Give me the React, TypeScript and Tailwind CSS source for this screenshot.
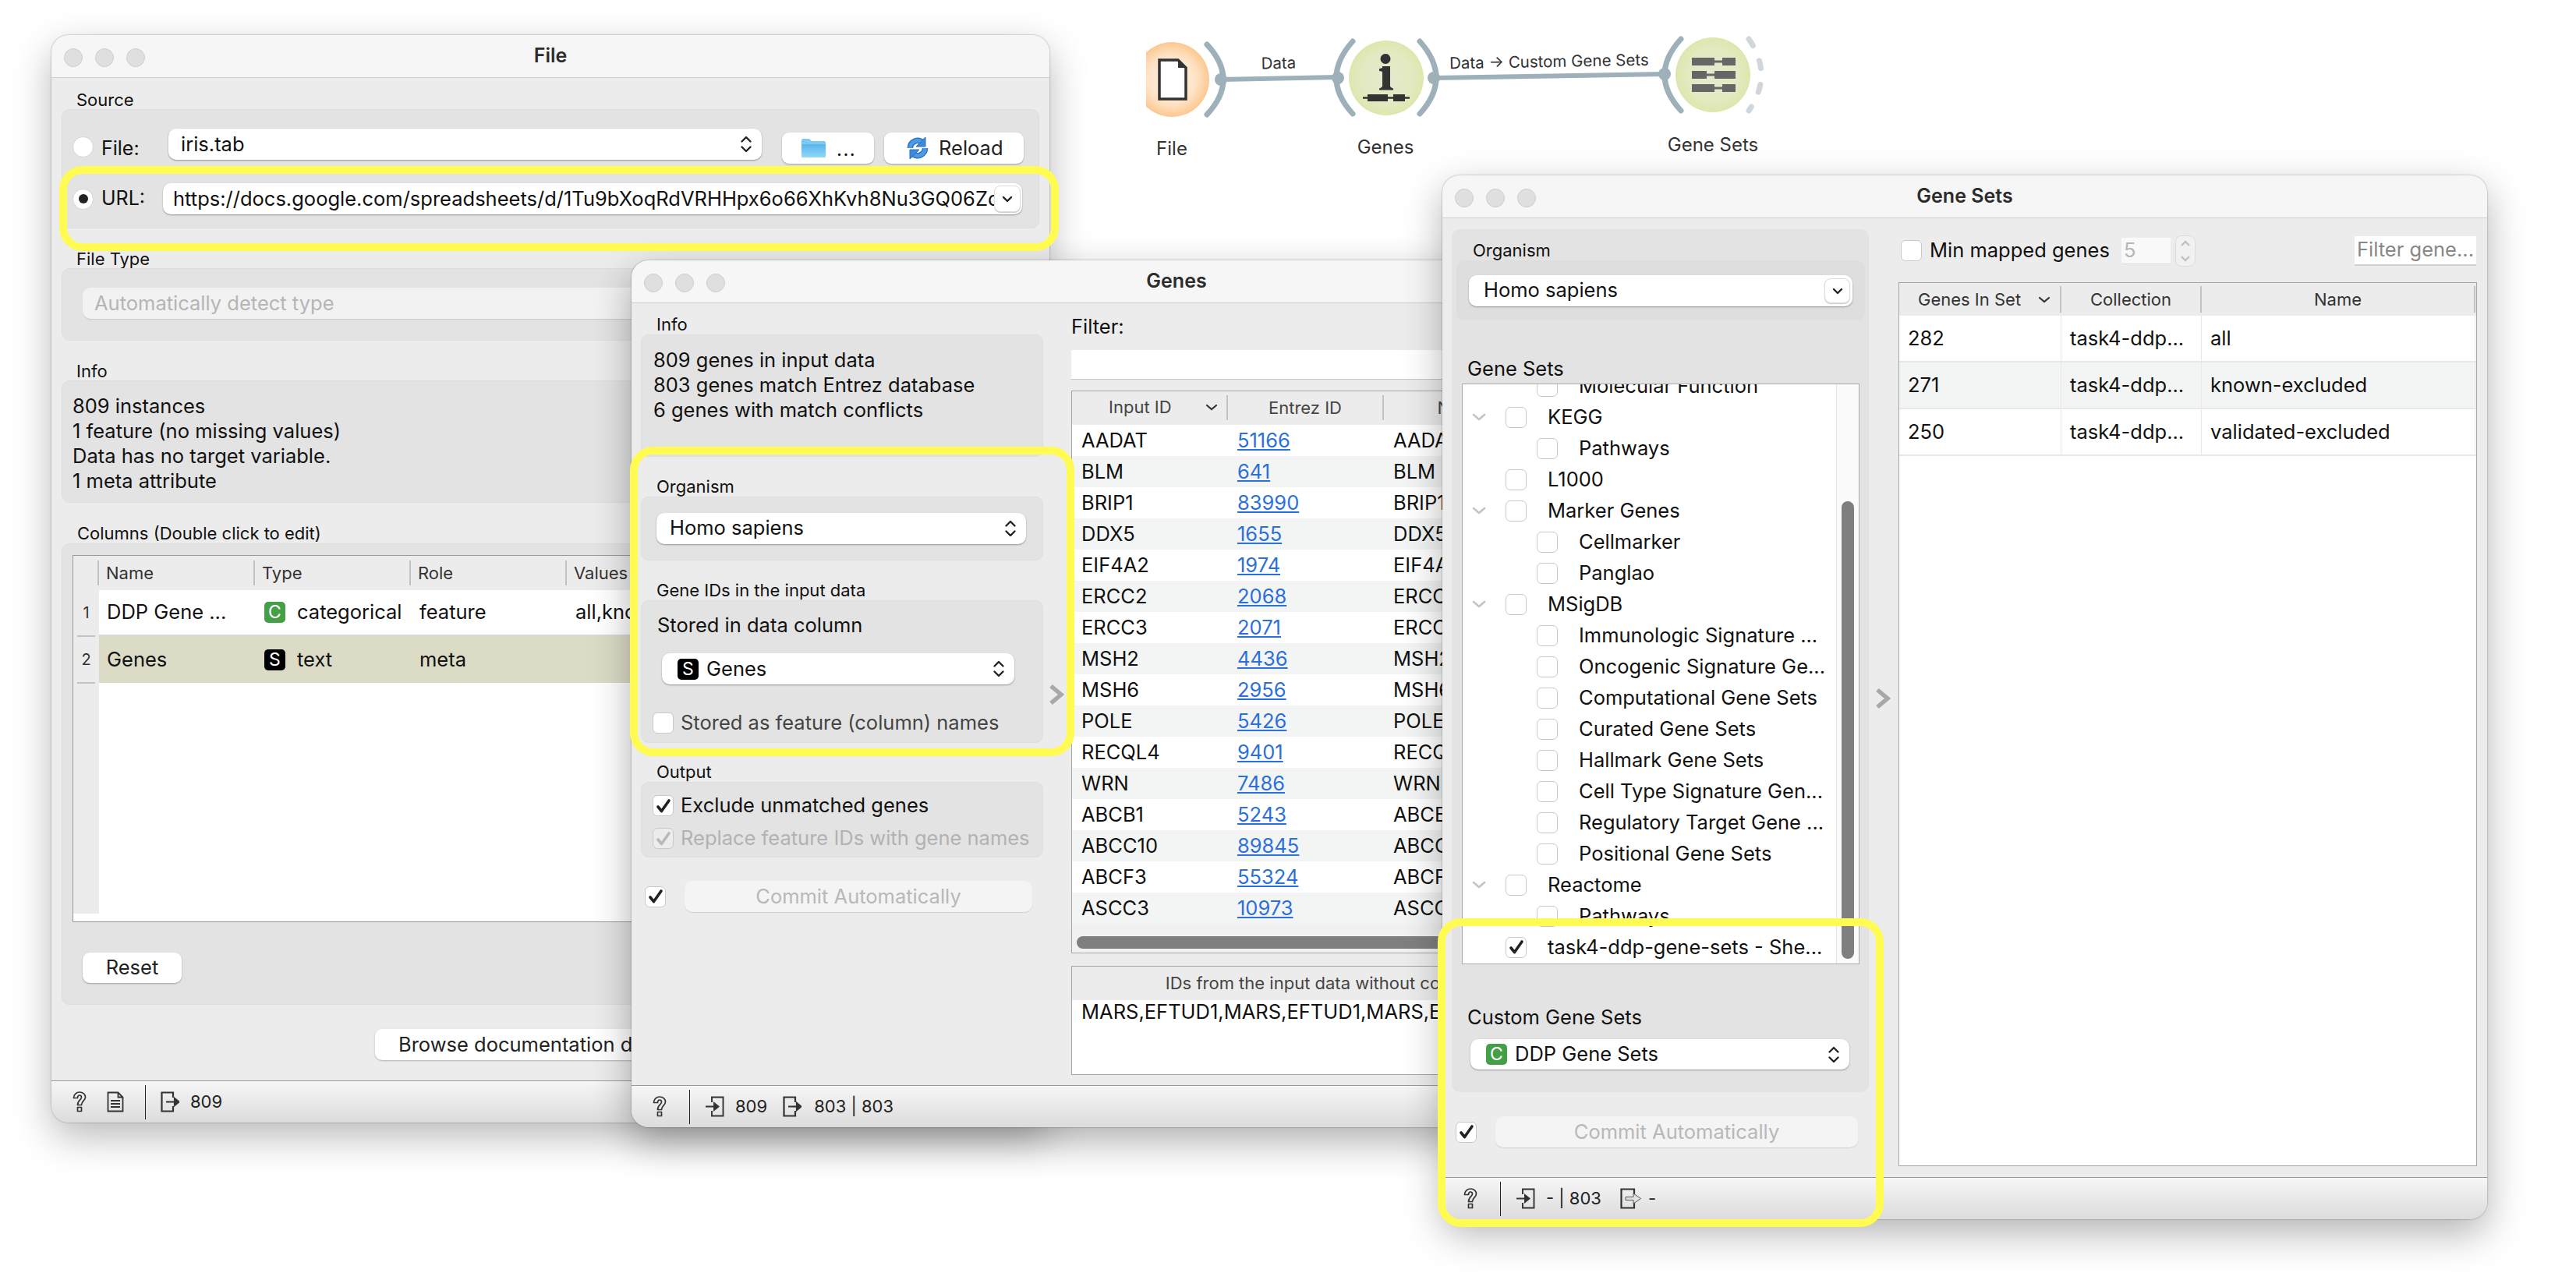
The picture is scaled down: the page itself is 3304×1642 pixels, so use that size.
import React from 'react';

const geneRows = [
    ['AADAT', '51166'],
    ['BLM', '641'],
    ['BRIP1', '83990'],
    ['DDX5', '1655'],
    ['EIF4A2', '1974'],
    ['ERCC2', '2068'],
    ['ERCC3', '2071'],
    ['MSH2', '4436'],
    ['MSH6', '2956'],
    ['POLE', '5426'],
    ['RECQL4', '9401'],
    ['WRN', '7486'],
    ['ABCB1', '5243'],
    ['ABCC10', '89845'],
    ['ABCF3', '55324'],
    ['ASCC3', '10973'],
];

const treeRows: [string, number, boolean][] = [
    ['Molecular Function', 1, false],
    ['KEGG', 0, true],
    ['Pathways', 1, false],
    ['L1000', 0, false],
    ['Marker Genes', 0, true],
    ['Cellmarker', 1, false],
    ['Panglao', 1, false],
    ['MSigDB', 0, true],
    ['Immunologic Signature ...', 1, false],
    ['Oncogenic Signature Ge...', 1, false],
    ['Computational Gene Sets', 1, false],
    ['Curated Gene Sets', 1, false],
    ['Hallmark Gene Sets', 1, false],
    ['Cell Type Signature Gen...', 1, false],
    ['Regulatory Target Gene ...', 1, false],
    ['Positional Gene Sets', 1, false],
    ['Reactome', 0, true],
    ['Pathways', 1, false],
];

const setRows = [
    ['282', 'all'],
    ['271', 'known-excluded'],
    ['250', 'validated-excluded'],
];

const UpDown = () => (
    <svg width="16" height="24" viewBox="0 0 16 24" fill="none" stroke="#222" strokeWidth="2.4" strokeLinecap="round" strokeLinejoin="round">
        <path d="M2.5 8.5 8 3l5.500 5.500M2.500 15.500 8 21l5.500-5.500" />
    </svg>
);

const DropBtn = ({ className }: { className: string }) => (
    <div className={`flex items-center justify-center rounded-[8px] border border-[#dcdcdc] bg-white shadow-[0_1px_1px_rgba(0,0,0,0.2)] ${className}`}>
        <svg width="14" height="9" viewBox="0 0 14 9" fill="none" stroke="#222" strokeWidth="2.4" strokeLinecap="round" strokeLinejoin="round">
            <path d="M2 2l5 5 5-5" />
        </svg>
    </div>
);

const Badge = ({ kind }: { kind: 'C' | 'S' }) => (
    <span className={`flex h-[27px] w-[27px] shrink-0 items-center justify-center rounded-[5px] text-[23px] leading-none text-white ${kind === 'C' ? 'bg-[#43a047]' : 'bg-black'}`}>
        {kind}
    </span>
);

const Check = ({ on, off, className }: { on?: boolean; off?: boolean; className?: string }) => (
    <span className={`flex h-[27px] w-[27px] shrink-0 items-center justify-center rounded-[6px] border border-[#c9c9c9] ${off ? 'bg-[#ececec]' : 'bg-white'} ${className ?? ''}`}>
        {on && (
            <svg width="20" height="20" viewBox="0 0 20 20" fill="none" stroke={off ? '#b9b9b9' : '#222'} strokeWidth="3.6" strokeLinecap="round" strokeLinejoin="round">
                <path d="M3 11l4.500 5.500L17 3" />
            </svg>
        )}
    </span>
);

const Help = () => (
    <svg width="18" height="27" viewBox="0 0 18 27" fill="none" stroke="#333" strokeWidth="1.7" strokeLinejoin="round">
        <path d="M1.500 8.500C1.500 4 5 1 9 1c4.500 0 7.500 2.800 7.500 6.500 0 4.500-5 5-5 10h-5c0-6.500 5-6.500 5-10 0-1.500-1-2.500-2.500-2.500S6.500 6.500 6.500 8.500z" />
        <rect x="6.500" y="20.500" width="5" height="5" />
    </svg>
);

const DocIcon = () => (
    <svg width="22" height="27" viewBox="0 0 22 27" fill="none" stroke="#333" strokeWidth="1.8">
        <path d="M1.500 1.500h13l6 6v18h-19zM14.500 1.500v6h6M5 12h12M5 16h12M5 20h12" />
    </svg>
);

const InIcon = () => (
    <svg width="24" height="27" viewBox="0 0 24 27" fill="none" stroke="#333" strokeWidth="1.9">
        <path d="M8 8V1.500h14.500v24H8V19" />
        <path d="M0 13.500h15" />
        <path d="M11 9l5.500 4.500L11 18z" fill="#333" />
    </svg>
);

const OutIcon = ({ hollow }: { hollow?: boolean }) => (
    <svg width={hollow ? 28 : 24} height="27" viewBox={hollow ? '0 0 28 27' : '0 0 24 27'} fill="none" stroke="#333" strokeWidth="2.2">
        {hollow ? (
            <>
                <path d="M18 8V1.500H1.500v24H18V19" />
                <path d="M7 11.500h10V7l9.500 6.500L17 20v-4.500H7z" strokeWidth="1" stroke="#555" fill="#e2e2e2" />
            </>
        ) : (
            <>
                <path d="M16 8V1.500H1.500v24H16V19" />
                <path d="M7 13.500h12" />
                <path d="M18 9l5.500 4.500L18 18z" fill="#333" />
            </>
        )}
    </svg>
);

const TrafficLights = () => (
    <div className="absolute left-[16px] top-[17px] flex gap-[16px]">
        <span className="h-[24px] w-[24px] rounded-full border border-[#cdcdcd] bg-[#dfdfdf]" />
        <span className="h-[24px] w-[24px] rounded-full border border-[#cdcdcd] bg-[#dfdfdf]" />
        <span className="h-[24px] w-[24px] rounded-full border border-[#cdcdcd] bg-[#dfdfdf]" />
    </div>
);

const TitleBar = ({ title }: { title: string }) => (
    <div className="relative flex h-[55px] shrink-0 items-center justify-center border-b border-[#cfcfcf] bg-[#f6f6f6] text-[25px] font-semibold text-[#2c2c2c]">
        <TrafficLights />
        {title}
    </div>
);

const Label = ({ className, children }: { className: string; children: React.ReactNode }) => (
    <div className={`flex items-center text-[22px] text-[#111] ${className}`}>{children}</div>
);

const CommitBtn = ({ className }: { className: string }) => (
    <div className={`flex h-[40px] items-center justify-center rounded-[10px] bg-[#f4f4f4] text-[25.500px] text-[#b8b8b8] shadow-[0_1px_1px_rgba(0,0,0,0.12)] ${className}`}>
        Commit Automatically
    </div>
);

const Chevron = () => (
    <svg width="20" height="12" viewBox="0 0 20 12" fill="none" stroke="#c4c4c4" strokeWidth="2.600" strokeLinecap="round" strokeLinejoin="round">
        <path d="M3 3l7 6 7-6" />
    </svg>
);

const SideArrow = () => (
    <svg width="20" height="28" viewBox="0 0 20 28" fill="none" stroke="#a8a8a8" strokeWidth="5.500">
        <path d="M2 3 15 14 2 25" />
    </svg>
);

const Diagram = () => (
    <svg className="absolute left-[1470px] top-0" width="820" height="220" viewBox="1470 0 820 220" fill="none">
        <defs>
            <radialGradient id="orange">
                <stop offset="0%" stopColor="#fff3e6" />
                <stop offset="65%" stopColor="#ffe3c6" />
                <stop offset="100%" stopColor="#fcc890" />
            </radialGradient>
            <radialGradient id="green">
                <stop offset="0%" stopColor="#e6e9cf" />
                <stop offset="70%" stopColor="#e3e9c0" />
                <stop offset="100%" stopColor="#dce8ae" />
            </radialGradient>
        </defs>
        <g stroke="#9eb0ba" strokeWidth="7" strokeLinecap="round">
            <path d="M1566 102 1716 99M1839 100 2135 95" strokeWidth="6" />
            <path d="M1548 57Q1590 102 1548 147" />
            <path d="M1735 53Q1693 100 1735 146" />
            <path d="M1821 53Q1863 100 1821 146" />
            <path d="M2156 50Q2114 96 2156 142" />
            <path d="M2243 50Q2275 96 2243 142" stroke="#cfd7dc" strokeDasharray="10 21" />
        </g>
        <g fill="#9eb0ba">
            <circle cx="1566" cy="102" r="8" />
            <circle cx="1716" cy="100" r="8" />
            <circle cx="1839" cy="100" r="8" />
            <circle cx="2135" cy="95" r="8" />
        </g>
        <circle cx="1503" cy="102" r="48" fill="url(#orange)" />
        <circle cx="1778" cy="100" r="48" fill="url(#green)" />
        <circle cx="2197" cy="96" r="48" fill="url(#green)" />
        <path d="M1487 77h24l10 10v40h-34z" fill="#fff" stroke="#333" strokeWidth="3.500" />
        <path d="M1511 77l10 10h-10z" fill="#333" />
        <circle cx="1777" cy="75.500" r="6.500" fill="#333" />
        <path d="M1773 85h10v25q0 2 4 3.500v2h-18v-2q4-1.500 4-3.500v-17q0-2-4-2v-3q2 0 4-1z" fill="#333" />
        <path d="M1748 125.500h60" stroke="#333" strokeWidth="2.500" />
        <path d="M1754 121h26v9h-26zM1787 121h15v9h-15z" fill="#333" />
        <path d="M2170 74h29v10h-29zM2209 74h17v10h-17zM2170 91h19v10h-19zM2199 91h27v10h-27zM2170 108h29v10h-29zM2209 108h17v10h-17z" fill="#666" />
        <path d="M2199 79h10M2189 96h10M2199 113h10" stroke="#666" strokeWidth="3" />
        <g fill="#333" fontFamily="Inter, sans-serif" textAnchor="middle">
            <text x="1640" y="88" fontSize="20.500" transform="rotate(-1 1640 88)">Data</text>
            <text x="1987" y="86" fontSize="20.500" transform="rotate(-1 1987 86)">Data → Custom Gene Sets</text>
            <text x="1503" y="199" fontSize="24">File</text>
            <text x="1777" y="197" fontSize="24">Genes</text>
            <text x="2197" y="194" fontSize="24">Gene Sets</text>
        </g>
    </svg>
);

const FileWindow = () => (
    <div className="absolute left-[66px] top-[45px] flex h-[1395px] w-[1280px] flex-col overflow-hidden rounded-[22px] bg-[#ececec] shadow-[0_18px_50px_rgba(0,0,0,0.28),0_0_2px_rgba(0,0,0,0.45)]">
        <TitleBar title="File" />
        <div className="flex flex-1 flex-col px-[13px] pt-[16px] text-[25.500px] text-[#111]">
            <Label className="h-[24px] pl-[19px]">Source</Label>
            <div className="h-[153px] rounded-[10px] border border-[#dedede] bg-[#e3e3e3] pt-[24px]">
                <div className="flex h-[40px] items-start">
                    <span className="ml-[13px] mt-[10px] h-[27px] w-[27px] rounded-full border border-[#d4d4d4] bg-white" />
                    <span className="ml-[10px] mt-[11px] w-[86px] text-[25px] leading-[28px]">File:</span>
                    <div className="flex h-[40px] w-[761px] items-center justify-between rounded-[10px] bg-white pl-[16px] pr-[12px] shadow-[0_1px_2px_rgba(0,0,0,0.35)]">
                        iris.tab
                        <UpDown />
                    </div>
                    <div className="ml-[26px] mt-[5px] flex h-[40px] w-[118px] items-center rounded-[9px] bg-white pl-[25px] shadow-[0_1px_2px_rgba(0,0,0,0.3)]">
                        <svg width="31" height="24" viewBox="0 0 31 24">
                            <defs>
                                <linearGradient id="folder" x1="0" y1="0" x2="0" y2="1">
                                    <stop offset="0%" stopColor="#58b4ea" />
                                    <stop offset="100%" stopColor="#93d8fb" />
                                </linearGradient>
                            </defs>
                            <path d="M0 2q0-2 2-2h8l3 3h16q2 0 2 2v17q0 2-2 2H2q-2 0-2-2z" fill="#7cc9f4" />
                            <path d="M0 7h31v15q0 2-2 2H2q-2 0-2-2z" fill="url(#folder)" />
                        </svg>
                        <span className="ml-[14px] mt-[4px] text-[24px] tracking-[1.500px]">...</span>
                    </div>
                    <div className="ml-[13px] mt-[5px] flex h-[40px] w-[179px] items-center rounded-[9px] bg-white pl-[29px] shadow-[0_1px_2px_rgba(0,0,0,0.3)]">
                        <svg width="28" height="30" viewBox="0 0 28 30" fill="none">
                            <path d="M4.500 15a9.500 9.500 0 0 1 16-7M23.500 15a9.500 9.500 0 0 1-16 7" stroke="#2c6fbe" strokeWidth="7.500" />
                            <path d="M4.500 15a9.500 9.500 0 0 1 16-7M23.500 15a9.500 9.500 0 0 1-16 7" stroke="#4a9ae6" strokeWidth="5" />
                            <path d="M24 1v12H12zM4 29V17h12z" fill="#3d8ada" stroke="#2c6fbe" strokeWidth="1" />
                        </svg>
                        <span className="ml-[13px] text-[#222]">Reload</span>
                    </div>
                </div>
                <div className="mt-[30px] flex h-[40px] items-center">
                    <span className="ml-[13px] flex h-[27px] w-[27px] items-center justify-center rounded-full border border-[#d4d4d4] bg-white">
                        <span className="h-[12px] w-[12px] rounded-full bg-[#222]" />
                    </span>
                    <span className="ml-[10px] w-[79px] text-[25px]">URL:</span>
                    <div className="relative flex h-[40px] w-[1102px] items-center overflow-hidden rounded-[10px] bg-white pl-[13px] whitespace-nowrap shadow-[0_1px_2px_rgba(0,0,0,0.35)]">
                        https://docs.google.com/spreadsheets/d/1Tu9bXoqRdVRHHpx6o66XhKvh8Nu3GQ06Zd
                        <DropBtn className="absolute right-[2px] top-[3px] h-[34px] w-[34px]" />
                    </div>
                </div>
            </div>
            <Label className="mt-[27px] h-[24px] pl-[19px]">File Type</Label>
            <div className="h-[93px] rounded-[10px] border border-[#dedede] bg-[#e3e3e3] pl-[26px] pr-[20px] pt-[24px]">
                <div className="flex h-[40px] items-center rounded-[10px] bg-[#f2f2f2] pl-[15px] text-[#b5b5b5] shadow-[0_1px_1px_rgba(0,0,0,0.12)]">
                    Automatically detect type
                </div>
            </div>
            <Label className="mt-[27px] h-[24px] pl-[19px]">Info</Label>
            <div className="h-[157px] rounded-[10px] border border-[#dedede] bg-[#e3e3e3] pl-[13px] pt-[16px] leading-[32px]">
                <div>809 instances</div>
                <div>1 feature (no missing values)</div>
                <div>Data has no target variable.</div>
                <div>1 meta attribute</div>
            </div>
            <Label className="mt-[26px] h-[26px] pl-[20px]">Columns (Double click to edit)</Label>
            <div className="h-[592px] rounded-[10px] border border-[#dedede] bg-[#e3e3e3] px-[13px] pt-[14px]">
                <div className="h-[471px] overflow-hidden border border-[#999] bg-white">
                    <div className="flex h-[44px] items-center bg-[#ececec] text-[22px] text-[#333]">
                        <span className="h-[32px] w-[33px] border-r-2 border-[#c2c2c2]" />
                        <span className="h-[32px] w-[200px] border-r-2 border-[#c2c2c2] pl-[9px] leading-[32px]">Name</span>
                        <span className="h-[32px] w-[200px] border-r-2 border-[#c2c2c2] pl-[9px] leading-[32px]">Type</span>
                        <span className="h-[32px] w-[200px] border-r-2 border-[#c2c2c2] pl-[9px] leading-[32px]">Role</span>
                        <span className="h-[32px] pl-[9px] leading-[32px]">Values</span>
                    </div>
                    <div className="flex h-[415px]">
                        <div className="w-[33px] bg-[#ececec] text-[20px] text-[#333]">
                            <div className="mx-[5px] h-[60px] border-b-2 border-[#c2c2c2] pt-[14px] text-center">1</div>
                            <div className="mx-[5px] h-[60px] border-b-2 border-[#c2c2c2] pt-[14px] text-center">2</div>
                        </div>
                        <div className="flex-1">
                            <div className="flex h-[59px] items-center border-b-2 border-[#d9d9d9]">
                                <span className="w-[200px] pl-[10px]">DDP Gene ...</span>
                                <span className="flex w-[200px] items-center pl-[12px]">
                                    <Badge kind="C" />
                                    <span className="ml-[15px]">categorical</span>
                                </span>
                                <span className="w-[200px] pl-[11px]">feature</span>
                                <span className="pl-[11px]">all,known-excluded</span>
                            </div>
                            <div className="flex h-[60px] items-center bg-[#dcdbc6]">
                                <span className="w-[200px] pl-[10px]">Genes</span>
                                <span className="flex w-[200px] items-center pl-[12px]">
                                    <Badge kind="S" />
                                    <span className="ml-[15px]">text</span>
                                </span>
                                <span className="w-[200px] pl-[11px]">meta</span>
                            </div>
                        </div>
                    </div>
                </div>
                <div className="ml-[13px] mt-[39px] flex h-[39px] w-[127px] items-center justify-center rounded-[9px] bg-white text-[#222] shadow-[0_1px_2px_rgba(0,0,0,0.3)]">
                    Reset
                </div>
            </div>
            <div className="ml-[402px] mt-[31px] flex h-[40px] w-[640px] items-center rounded-[9px] bg-white pl-[30px] text-[#222] shadow-[0_1px_2px_rgba(0,0,0,0.25)]">
                Browse documentation data sets
            </div>
        </div>
        <div className="flex h-[54px] shrink-0 items-center border-t border-[#9a9a9a] bg-gradient-to-b from-[#f6f6f6] to-[#dcdcdc] text-[22px] text-[#222]">
            <span className="ml-[27px] flex"><Help /></span>
            <span className="ml-[26px] flex"><DocIcon /></span>
            <span className="ml-[27px] h-[44px] w-px bg-[#222]" />
            <span className="ml-[19px] flex"><OutIcon /></span>
            <span className="ml-[14px]">809</span>
        </div>
    </div>
);

const GenesWindow = () => (
    <div className="absolute left-[810px] top-[334px] flex h-[1112px] w-[1398px] flex-col overflow-hidden rounded-[22px] bg-[#ececec] shadow-[0_18px_50px_rgba(0,0,0,0.32),0_0_2px_rgba(0,0,0,0.45)]">
        <TitleBar title="Genes" />
        <div className="flex flex-1 text-[25.500px] text-[#111]">
            <div className="ml-[12px] w-[516px] pt-[15px]">
                <Label className="h-[25px] pl-[20px]">Info</Label>
                <div className="h-[157px] rounded-[10px] border border-[#dedede] bg-[#e3e3e3] pl-[15px] pt-[16px] leading-[32px]">
                    <div>809 genes in input data</div>
                    <div>803 genes match Entrez database</div>
                    <div>6 genes with match conflicts</div>
                </div>
                <Label className="mt-[26px] h-[25px] pl-[20px]">Organism</Label>
                <div className="h-[82px] rounded-[10px] border border-[#dedede] bg-[#e3e3e3] pl-[19px] pt-[20px]">
                    <div className="flex h-[40px] w-[474px] items-center justify-between rounded-[10px] bg-white pl-[17px] pr-[12px] shadow-[0_1px_2px_rgba(0,0,0,0.35)]">
                        <span className="pb-[2px]">Homo sapiens</span>
                        <UpDown />
                    </div>
                </div>
                <Label className="mt-[25px] h-[26px] pl-[20px]">Gene IDs in the input data</Label>
                <div className="h-[183px] rounded-[10px] border border-[#dedede] bg-[#e3e3e3] pt-[15px]">
                    <div className="pl-[20px] leading-[32px]">Stored in data column</div>
                    <div className="ml-[26px] mt-[20px] flex h-[40px] w-[452px] items-center justify-between rounded-[10px] bg-white pl-[20px] pr-[12px] shadow-[0_1px_2px_rgba(0,0,0,0.35)]">
                        <span className="flex items-center gap-[10px]">
                            <Badge kind="S" />
                            Genes
                        </span>
                        <UpDown />
                    </div>
                    <div className="ml-[14px] mt-[36px] flex h-[27px] items-center gap-[9px] text-[#444]">
                        <Check />
                        Stored as feature (column) names
                    </div>
                </div>
                <Label className="mt-[25px] h-[25px] pl-[20px]">Output</Label>
                <div className="h-[97px] rounded-[10px] border border-[#dedede] bg-[#e3e3e3] pl-[14px] pt-[16px]">
                    <div className="flex h-[27px] items-center gap-[9px]">
                        <Check on />
                        Exclude unmatched genes
                    </div>
                    <div className="mt-[15px] flex h-[27px] items-center gap-[9px] text-[#b2b2b2]">
                        <Check on off />
                        Replace feature IDs with gene names
                    </div>
                </div>
                <div className="mt-[30px] flex items-center pl-[5px]">
                    <Check on />
                    <CommitBtn className="ml-[24px] w-[446px]" />
                </div>
            </div>
            <div className="flex w-[36px] shrink-0 justify-center pt-[488px]">
                <div><SideArrow /></div>
            </div>
            <div className="w-[820px] pt-[18px]">
                <div className="h-[24px] leading-[24px]">Filter:</div>
                <div className="mt-[18px] h-[38px] border-b border-[#c4c4c4] bg-white" />
                <div className="mt-[14px] h-[722px] overflow-hidden border border-[#a5a5a5] bg-[#f1f1f1]">
                    <div className="flex h-[43px] items-center bg-[#ececec] pb-[2px] text-[22px] text-[#444]">
                        <span className="flex h-[32px] w-[200px] items-center border-r-2 border-[#c2c2c2] pl-[47px]">
                            Input ID
                            <svg className="ml-[43px]" width="16" height="9" viewBox="0 0 16 9" fill="none" stroke="#333" strokeWidth="2.200" strokeLinecap="round">
                                <path d="M2 2l6 5 6-5" />
                            </svg>
                        </span>
                        <span className="h-[32px] w-[200px] border-r-2 border-[#c2c2c2] text-center leading-[32px]">Entrez ID</span>
                        <span className="h-[32px] w-[200px] border-r-2 border-[#c2c2c2] text-center leading-[32px]">Name</span>
                    </div>
                    {geneRows.map((row, i) => (
                        <div key={row[0]} className={`flex h-[40px] items-center ${i % 2 ? 'bg-[#f3f5f4]' : 'bg-white'}`}>
                            <span className="w-[200px] pl-[12px]">{row[0]}</span>
                            <span className="w-[200px] pl-[12px]">
                                <span className="text-[#2b6fdc] underline">{row[1]}</span>
                            </span>
                            <span className="w-[200px] pl-[12px]">{row[0]}</span>
                        </div>
                    ))}
                    <div className="mt-[16px] ml-[6px] h-[16px] w-[1000px] rounded-full bg-[#7f7f7f]" />
                </div>
                <div className="mt-[16px] h-[140px] overflow-hidden border border-[#a5a5a5] bg-white">
                    <div className="flex h-[43px] items-center justify-center bg-[#ececec] text-[22px] text-[#444]">
                        IDs from the input data without corresponding Entrez ID
                    </div>
                    <div className="pl-[12px] pt-[1px] leading-[28px] whitespace-nowrap">MARS,EFTUD1,MARS,EFTUD1,MARS,EFTUD1</div>
                </div>
            </div>
        </div>
        <div className="flex h-[54px] shrink-0 items-center border-t border-[#9a9a9a] bg-gradient-to-b from-[#f6f6f6] to-[#dcdcdc] text-[22px] text-[#222]">
            <span className="ml-[27px] flex"><Help /></span>
            <span className="ml-[29px] h-[44px] w-px bg-[#222]" />
            <span className="ml-[20px] flex"><InIcon /></span>
            <span className="ml-[14px]">809</span>
            <span className="ml-[20px] flex"><OutIcon /></span>
            <span className="ml-[16px]">803 | 803</span>
        </div>
    </div>
);

const GeneSetsWindow = () => (
    <div className="absolute left-[1850px] top-[225px] flex h-[1339px] w-[1340px] flex-col overflow-hidden rounded-[22px] bg-[#ececec] shadow-[0_18px_50px_rgba(0,0,0,0.3),0_0_2px_rgba(0,0,0,0.45)]">
        <TitleBar title="Gene Sets" />
        <div className="flex flex-1 text-[25.500px] text-[#111]">
            <div className="ml-[12px] w-[535px] shrink-0 pt-[14px]">
                <div className="h-[1107px] rounded-[10px] bg-[#e3e3e3] pt-[15px]">
                    <Label className="h-[25px] pl-[27px]">Organism</Label>
                    <div className="ml-[6px] h-[77px] w-[524px] rounded-[10px] bg-[#dedede] pl-[16px] pt-[19px]">
                        <div className="relative flex h-[40px] w-[492px] items-center rounded-[10px] bg-white pb-[2px] pl-[19px] shadow-[0_1px_2px_rgba(0,0,0,0.35)]">
                            Homo sapiens
                            <DropBtn className="absolute right-[3px] top-[4px] h-[32px] w-[33px]" />
                        </div>
                    </div>
                    <div className="ml-[20px] mt-[46px] h-[35px] leading-[32px]">Gene Sets</div>
                    <div className="ml-[13px] flex h-[745px] w-[510px] overflow-hidden border border-[#aaa] bg-white">
                        <div className="-mt-[18px] flex-1">
                            {treeRows.map(([name, depth, arrow], i) => (
                                <div key={i} className="flex h-[40px] items-center">
                                    {depth ? (
                                        <>
                                            <Check className="ml-[95px]" />
                                            <span className="ml-[27px] whitespace-nowrap">{name}</span>
                                        </>
                                    ) : (
                                        <>
                                            <span className="flex w-[55px] justify-start pl-[11px]">{arrow && <Chevron />}</span>
                                            <Check />
                                            <span className="ml-[27px] whitespace-nowrap">{name}</span>
                                        </>
                                    )}
                                </div>
                            ))}
                            <div className="flex h-[40px] items-center">
                                <Check on className="ml-[55px]" />
                                <span className="ml-[27px] whitespace-nowrap">task4-ddp-gene-sets - She...</span>
                            </div>
                        </div>
                        <div className="w-[29px] shrink-0 border-l border-[#e4e4e4] bg-[#fbfbfb] pl-[6px] pt-[150px]">
                            <div className="h-[587px] w-[16px] rounded-full bg-[#7f7f7f]" />
                        </div>
                    </div>
                    <div className="ml-[20px] mt-[53px] h-[43px] leading-[30px]">Custom Gene Sets</div>
                    <div className="ml-[24px] flex h-[39px] w-[486px] items-center justify-between rounded-[10px] bg-white pl-[20px] pr-[12px] shadow-[0_1px_2px_rgba(0,0,0,0.35)]">
                        <span className="flex items-center gap-[10px]">
                            <Badge kind="C" />
                            DDP Gene Sets
                        </span>
                        <UpDown />
                    </div>
                </div>
                <div className="mt-[31px] flex items-center pl-[5px]">
                    <Check on />
                    <CommitBtn className="ml-[24px] w-[465px]" />
                </div>
            </div>
            <div className="flex w-[38px] shrink-0 justify-center pt-[602px]">
                <div><SideArrow /></div>
            </div>
            <div className="w-[742px] pt-[21px]">
                <div className="flex h-[41px] items-center">
                    <Check className="ml-[3px]" />
                    <span className="ml-[10px] w-[246px]">Min mapped genes</span>
                    <span className="flex h-[34px] w-[63px] items-center border-b border-[#dcdcdc] bg-[#f9f9f9] pl-[3px] text-[#b5b5b5]">5</span>
                    <span className="ml-[6px] flex h-[40px] w-[26px] flex-col items-center justify-around rounded-[8px] border border-[#dcdcdc] bg-[#f1f1f1]">
                        <svg width="14" height="9" viewBox="0 0 14 9" fill="none" stroke="#c0c0c0" strokeWidth="2.400"><path d="M2 7l5-5 5 5" /></svg>
                        <svg width="14" height="9" viewBox="0 0 14 9" fill="none" stroke="#c0c0c0" strokeWidth="2.400"><path d="M2 2l5 5 5-5" /></svg>
                    </span>
                    <span className="ml-auto mr-[1px] flex h-[38px] w-[156px] items-center overflow-hidden whitespace-nowrap border-b-2 border-[#d0d0d0] bg-white pl-[3px] text-[#888]">Filter gene...</span>
                </div>
                <div className="mt-[20px] h-[1134px] border border-[#a5a5a5] bg-white">
                    <div className="flex h-[42px] items-center bg-[#ececec] text-[22px] text-[#333]">
                        <span className="flex h-[34px] w-[208px] items-center border-r-2 border-[#c2c2c2] pl-[24px]">
                            Genes In Set
                            <svg className="ml-[22px]" width="16" height="9" viewBox="0 0 16 9" fill="none" stroke="#333" strokeWidth="2.200" strokeLinecap="round">
                                <path d="M2 2l6 5 6-5" />
                            </svg>
                        </span>
                        <span className="h-[34px] w-[180px] border-r-2 border-[#c2c2c2] text-center leading-[34px]">Collection</span>
                        <span className="h-[34px] w-[351px] border-r-2 border-[#c2c2c2] text-center leading-[34px]">Name</span>
                    </div>
                    {setRows.map((row, i) => (
                        <div key={row[0]} className={`flex h-[60px] items-center border-b-2 border-[#e8e8e8] ${i === 1 ? 'bg-[#f3f5f4]' : 'bg-white'}`}>
                            <span className="flex h-full w-[208px] items-center border-r border-[#e8e8e8] pl-[11px]">{row[0]}</span>
                            <span className="flex h-full w-[180px] items-center border-r border-[#e8e8e8] pl-[11px]">task4-ddp...</span>
                            <span className="flex h-full w-[351px] items-center border-r border-[#e8e8e8] pl-[11px]">{row[1]}</span>
                        </div>
                    ))}
                </div>
            </div>
        </div>
        <div className="flex h-[54px] shrink-0 items-center border-t border-[#9a9a9a] bg-gradient-to-b from-[#f6f6f6] to-[#dcdcdc] text-[22px] text-[#222]">
            <span className="ml-[27px] flex"><Help /></span>
            <span className="ml-[29px] h-[44px] w-px bg-[#222]" />
            <span className="ml-[20px] flex"><InIcon /></span>
            <span className="ml-[14px]">- | 803</span>
            <span className="ml-[24px] flex"><OutIcon hollow /></span>
            <span className="ml-[8px]">-</span>
        </div>
    </div>
);

const App: React.FC = () => {
    return (
        <div className="relative h-[1642px] w-[3304px] overflow-hidden bg-white font-[Inter,sans-serif]">
            <Diagram />
            <FileWindow />
            <GenesWindow />
            <GeneSetsWindow />
            <div className="absolute left-[76px] top-[213px] h-[109px] w-[1282px] rounded-[30px] border-[10px] border-[#fffb52]" />
            <div className="absolute left-[808px] top-[573px] h-[397px] w-[570px] rounded-[30px] border-[10px] border-[#fffb52]" />
            <div className="absolute left-[1844px] top-[1178px] h-[396px] w-[572px] rounded-[30px] border-[10px] border-[#fffb52]" />
        </div>
    );
};

export default App;
